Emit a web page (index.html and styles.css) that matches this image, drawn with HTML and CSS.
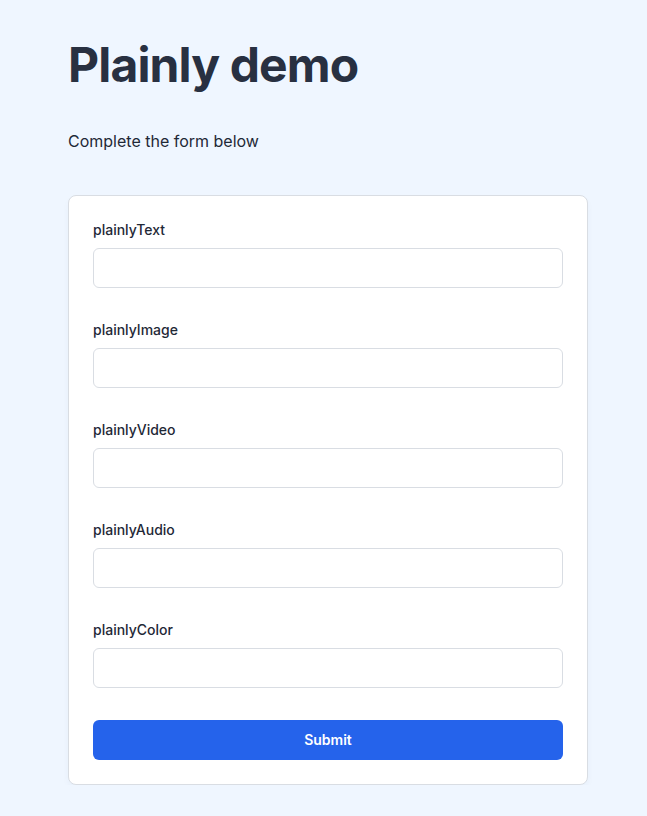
FILE: index.html
```html
<!DOCTYPE html>
<html lang="en">
<head>
<meta charset="utf-8">
<title>Plainly demo</title>
<link rel="stylesheet" href="styles.css">
</head>
<body>
<main class="page">
  <h1 class="title">Plainly demo</h1>
  <p class="lead">Complete the form below</p>
  <form class="card">
    <div class="field">
      <label class="label" for="f1">plainlyText</label>
      <input class="input" id="f1" type="text">
    </div>
    <div class="field">
      <label class="label" for="f2">plainlyImage</label>
      <input class="input" id="f2" type="text">
    </div>
    <div class="field">
      <label class="label" for="f3">plainlyVideo</label>
      <input class="input" id="f3" type="text">
    </div>
    <div class="field">
      <label class="label" for="f4">plainlyAudio</label>
      <input class="input" id="f4" type="text">
    </div>
    <div class="field">
      <label class="label" for="f5">plainlyColor</label>
      <input class="input" id="f5" type="text">
    </div>
    <button class="submit" type="button">Submit</button>
  </form>
</main>
</body>
</html>
```
FILE: styles.css
```css
* { box-sizing: border-box; }
html, body { margin: 0; padding: 0; }
body {
  background: #eff6ff;
  font-family: Inter, "Noto Sans", sans-serif;
  color: #1f2937;
}
.page {
  width: 520px;
  margin-left: 68px;
  padding-top: 41px;
}
.title {
  margin: 0;
  font-size: 48px;
  line-height: 48px;
  font-weight: 700;
  letter-spacing: -0.018em;
  color: #283041;
}
.lead {
  margin: 40px 0 0;
  font-size: 16px;
  line-height: 24px;
  color: #1f2937;
}
.card {
  margin-top: 42px;
  background: #fff;
  border: 1px solid #d9dde3;
  border-radius: 8px;
  padding: 24px;
  display: flex;
  flex-direction: column;
  gap: 32px;
  box-shadow: 0 4px 8px -2px rgba(30, 60, 120, 0.06);
}
.field { display: flex; flex-direction: column; gap: 8px; }
.label {
  font-size: 14px;
  line-height: 20px;
  font-weight: 500;
  color: #1f2937;
}
.input {
  height: 40px;
  border: 1px solid #d9dde3;
  border-radius: 6px;
  background: #fff;
  font: inherit;
  padding: 0 12px;
}
.submit {
  height: 40px;
  border: 0;
  border-radius: 6px;
  background: #2563eb;
  color: #fff;
  font-family: inherit;
  font-size: 14px;
  line-height: 20px;
  font-weight: 600;
  padding: 10px 0;
}
```
